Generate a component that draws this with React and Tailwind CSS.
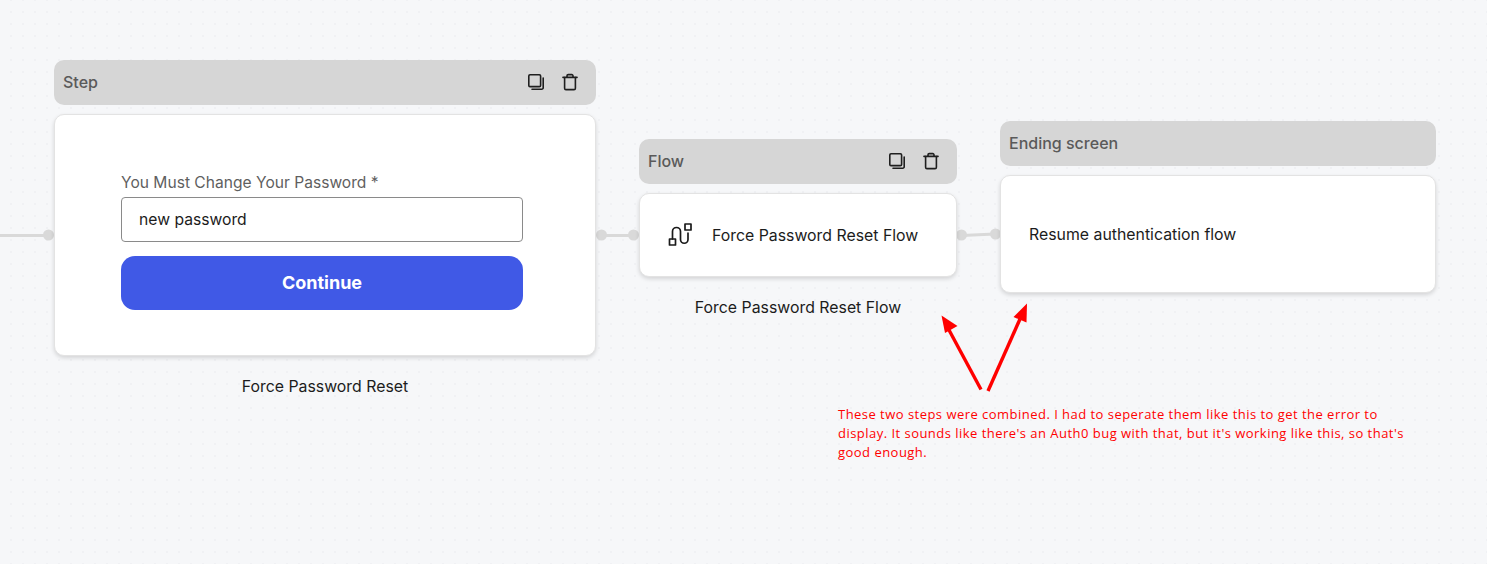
import React from "react";

function CopyIcon() {
  return (
    <svg width="18" height="18" viewBox="0 0 18 18" fill="none" stroke="#1f1f1f" strokeWidth="1.6" strokeLinejoin="round" strokeLinecap="round">
      <rect x="1.8" y="1.8" width="11.8" height="11.8" rx="1.2" />
      <path d="M16.2 5v9.7a1.5 1.5 0 0 1-1.5 1.5H5" />
    </svg>
  );
}

function TrashIcon() {
  return (
    <svg width="18" height="18" viewBox="0 0 18 18" fill="none" stroke="#1f1f1f" strokeWidth="1.6" strokeLinejoin="round" strokeLinecap="round">
      <path d="M2 4.4h14" />
      <path d="M6 4.2V2.8A1.2 1.2 0 0 1 7.2 1.6h3.6A1.2 1.2 0 0 1 12 2.8v1.4" />
      <path d="M3.6 4.6v10.6a1.4 1.4 0 0 0 1.4 1.4h8a1.4 1.4 0 0 0 1.4-1.4V4.6" />
    </svg>
  );
}

function FlowIcon() {
  return (
    <svg width="26" height="24" viewBox="0 0 26 24" fill="none" stroke="#1a1a1a" strokeWidth="1.7" strokeLinejoin="round" strokeLinecap="round">
      <rect x="1.5" y="16" width="6" height="6" />
      <rect x="17" y="1" width="6" height="6" />
      <path d="M4.5 16V8.5a4 4 0 0 1 8 0v8a3.75 3.75 0 0 0 7.5 0V10" />
    </svg>
  );
}

function Header({ title, width, icons }) {
  return (
    <div className={`${width} h-[45px] rounded-[10px] bg-[#d6d6d6] flex items-center justify-between pl-[9px] pr-[17px]`}>
      <span className="text-[16px] leading-[20px] font-medium text-[#5a5a5a] mt-[-2px]">{title}</span>
      {icons && (
        <div className="flex items-center gap-[16px] mt-[-1px]">
          <CopyIcon />
          <TrashIcon />
        </div>
      )}
    </div>
  );
}

function Edges() {
  const c = "#d9d9d9";
  return (
    <svg className="absolute inset-0" width="1487" height="564" fill="none">
      <path d="M0 235.5H48" stroke={c} strokeWidth="3" />
      <circle cx="48.5" cy="235" r="5.5" fill={c} />
      <path d="M601 235.5H633" stroke={c} strokeWidth="3" />
      <circle cx="601.5" cy="235" r="5.5" fill={c} />
      <circle cx="633.5" cy="235" r="5.5" fill={c} />
      <path d="M962 235.5L995 234" stroke={c} strokeWidth="3" />
      <circle cx="961.5" cy="235" r="5.5" fill={c} />
      <circle cx="995.5" cy="234" r="5.5" fill={c} />
    </svg>
  );
}

function Arrows() {
  return (
    <svg className="absolute inset-0" width="1487" height="564" fill="none">
      <path d="M981 389.5L949 330" stroke="#ff0000" strokeWidth="3.4" />
      <path d="M941.5 315.5L957.5 326L945 333Z" fill="#ff0000" />
      <path d="M988 391L1020 319" stroke="#ff0000" strokeWidth="3.4" />
      <path d="M1027 303.5L1026.5 322.5L1013.5 317Z" fill="#ff0000" />
    </svg>
  );
}

export default function App() {
  return (
    <div
      className="relative w-[1487px] h-[564px] overflow-hidden bg-[#f6f7f9] bg-[radial-gradient(circle,#f0f1f4_1px,transparent_1.5px)] bg-[length:12px_12px] bg-[position:5px_6px] font-['Inter',sans-serif]"
    >
      <Edges />

      <div className="absolute left-[54px] top-[60px] w-[542px]">
        <Header title="Step" width="w-[542px]" icons />
        <div className="mt-[9px] h-[242px] rounded-[10px] bg-white border border-[#e3e3e3] shadow-[0_2px_4px_rgba(0,0,0,0.14)] pl-[66px] pr-[72px] pt-[58px]">
          <div className="text-[15.6px] leading-[20px] text-[#5f5f5f]">You Must Change Your Password *</div>
          <div className="mt-[4px] h-[45px] rounded-[4px] border border-[#8a8a8a] flex items-center pl-[17px] text-[15.7px] text-[#1c1c1c]">
            <span>new password</span>
          </div>
          <div className="mt-[14px] h-[54px] rounded-[14px] bg-[#4059e6] flex items-center justify-center text-[18px] font-bold text-white">
            <span className="mt-[-2px]">Continue</span>
          </div>
        </div>
        <div className="mt-[21px] text-center text-[15.85px] leading-[20px] text-[#1c1c1c]">Force Password Reset</div>
      </div>

      <div className="absolute left-[639px] top-[139px] w-[318px]">
        <Header title="Flow" width="w-[318px]" icons />
        <div className="mt-[9px] h-[84px] rounded-[10px] bg-white border border-[#e3e3e3] shadow-[0_2px_4px_rgba(0,0,0,0.14)] flex items-center pl-[28px] gap-[18px]">
          <FlowIcon />
          <span className="text-[15.85px] text-[#1c1c1c] mt-[2px]">Force Password Reset Flow</span>
        </div>
        <div className="mt-[21px] text-center text-[15.85px] leading-[20px] text-[#1c1c1c]">Force Password Reset Flow</div>
      </div>

      <div className="absolute left-[1000px] top-[121px] w-[436px]">
        <Header title="Ending screen" width="w-[436px]" />
        <div className="mt-[9px] h-[118px] rounded-[10px] bg-white border border-[#e3e3e3] shadow-[0_2px_4px_rgba(0,0,0,0.14)] flex items-center pl-[28px]">
          <span className="text-[15.85px] text-[#1c1c1c] mt-[2px]">Resume authentication flow</span>
        </div>
      </div>

      <Arrows />

      <div className="absolute left-[838px] top-[405px] w-[600px] text-[13px] tracking-[0.47px] leading-[19px] text-[#ff0000] font-['Open_Sans',sans-serif]">
        <div>These two steps were combined. I had to seperate them like this to get the error to</div>
        <div>display. It sounds like there's an Auth0 bug with that, but it's working like this, so that's</div>
        <div>good enough.</div>
      </div>
    </div>
  );
}
